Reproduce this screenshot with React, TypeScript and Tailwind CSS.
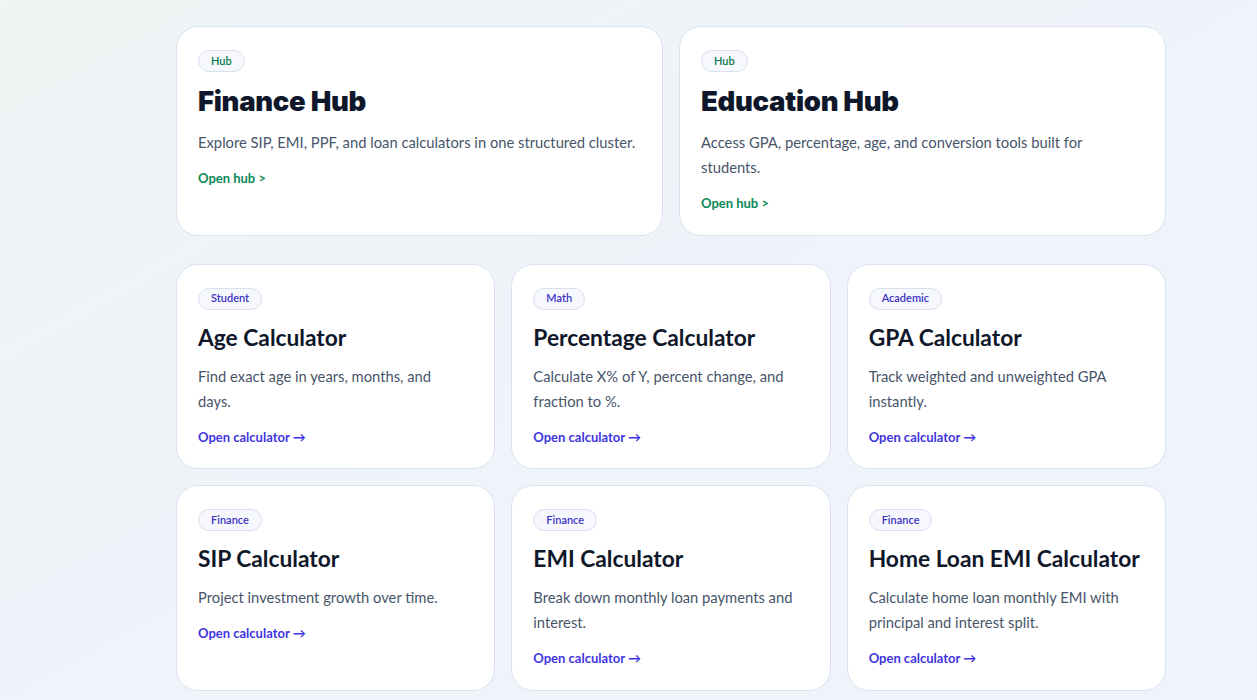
import React from "react";

type Hub = { title: string; desc: string };
type Calc = { tag: string; title: string; desc: string };

const hubs: Hub[] = [
  {
    title: "Finance Hub",
    desc: "Explore SIP, EMI, PPF, and loan calculators in one structured cluster.",
  },
  {
    title: "Education Hub",
    desc: "Access GPA, percentage, age, and conversion tools built for students.",
  },
];

const calcs: Calc[] = [
  { tag: "Student", title: "Age Calculator", desc: "Find exact age in years, months, and days." },
  { tag: "Math", title: "Percentage Calculator", desc: "Calculate X% of Y, percent change, and fraction to %." },
  { tag: "Academic", title: "GPA Calculator", desc: "Track weighted and unweighted GPA instantly." },
  { tag: "Finance", title: "SIP Calculator", desc: "Project investment growth over time." },
  { tag: "Finance", title: "EMI Calculator", desc: "Break down monthly loan payments and interest." },
  { tag: "Finance", title: "Home Loan EMI Calculator", desc: "Calculate home loan monthly EMI with principal and interest split." },
];

const Badge = ({ label, green }: { label: string; green?: boolean }) => (
  <span
    className={`inline-flex h-[22px] items-center rounded-full border border-[#d8e0ef] bg-[#f6f8fd] px-3 text-[11px] font-semibold ${
      green ? "text-[#0b7a4b]" : "text-[#3b32c4]"
    }`}
  >
    {label}
  </span>
);

export default function App() {
  return (
    <div
      className="min-h-[700px] w-full bg-gradient-to-br from-[#eef5f4] via-[#eff3fa] to-[#eff3fb] pt-[26px] pb-[10px]"
      style={{ fontFamily: "Lato, 'Noto Sans', sans-serif" }}
    >
      <div className="ml-[176px] w-[990px]">
        {/* HUBS */}
        <div className="grid grid-cols-2 gap-4">
          {hubs.map((h) => (
            <div
              key={h.title}
              className="flex flex-col items-start rounded-[22px] border border-[#dbe3f0] bg-white px-[21px] pt-[23px] pb-[21px]"
            >
              <Badge label="Hub" green />
              <h2 className="mt-[12px] font-['Inter',sans-serif] text-[27.5px] font-black leading-[34px] tracking-[-0.3px] text-[#0f172a]">
                {h.title}
              </h2>
              <p className="mt-[12px] text-[14.75px] leading-[25px] text-[#475569]">
                {h.desc}
              </p>
              <a className="mt-[14px] text-[13px] font-bold text-[#0a8a55]">Open hub &gt;</a>
            </div>
          ))}
        </div>

        {/* CALCULATORS */}
        <div className="mt-[28px] grid grid-cols-3 gap-4">
          {calcs.map((c) => (
            <div
              key={c.title}
              className="flex flex-col items-start rounded-[22px] border border-[#dbe3f0] bg-white px-[21px] pt-[23px] pb-[21px]"
            >
              <Badge label={c.tag} />
              <h3 className="mt-[13px] text-[22.75px] font-bold leading-[30px] text-[#0f172a]">
                {c.title}
              </h3>
              <p className="mt-[11px] max-w-[264px] text-[14.75px] leading-[25px] text-[#475569]">
                {c.desc}
              </p>
              <a className="mt-[14px] text-[13px] font-bold text-[#3f35e0]">Open calculator →</a>
            </div>
          ))}
        </div>
      </div>
    </div>
  );
}
